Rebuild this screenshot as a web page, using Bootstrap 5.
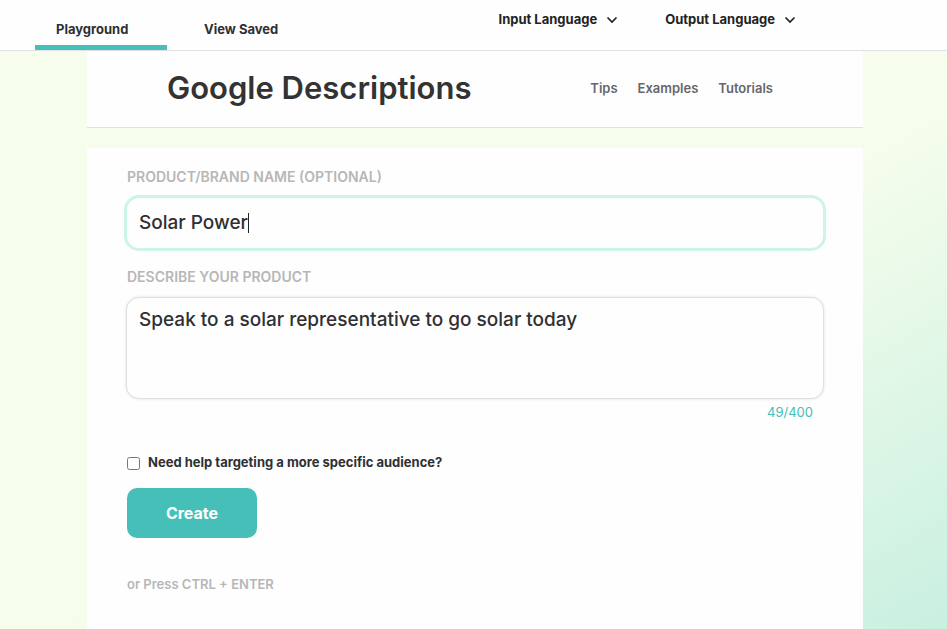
<!DOCTYPE html>
<html lang="en">
<head>
<meta charset="utf-8">
<meta name="viewport" content="width=device-width, initial-scale=1">
<title>Google Descriptions</title>
<link href="https://cdn.jsdelivr.net/npm/bootstrap@5.3.0/dist/css/bootstrap.min.css" rel="stylesheet">
<style>
  body {
    font-family: Inter, "Liberation Sans", sans-serif;
    font-size: 13px;
    line-height: 20px;
    font-weight: 600;
    color: #2f3033;
    background: linear-gradient(150deg, #f6fdec 56%, #c8f0e1 100%) fixed;
  }
  .topbar { background: #fefefe; border-bottom: 1px solid #dfe1e4; padding-left: 35px; font-weight: 700; }
  .tab-link { color: #2f3033; text-decoration: none; width: 132px; height: 50px; padding: 19px 21px 6px; border-bottom: 5px solid transparent; white-space: nowrap; }
  .tab-link.active { border-bottom-color: #46bfb8; }
  .tabs { gap: 16px; }
  .languages { gap: 46px; padding-top: 9px; margin-right: 150px; }
  .lang-btn { font-size: 13px; line-height: 20px; font-weight: 700; color: #222; gap: 8px; }
  .page { padding: 0 84px 0 87px; }
  .panel { background: #fefefe; }
  .title-panel { border-bottom: 1px solid #dfe1e4; padding: 17px 90px 19px 80px; margin-bottom: 20px; }
  .title-panel h1 { font-size: 31px; line-height: 40px; font-weight: 600; color: #333; }
  .title-panel nav { gap: 20px; }
  .title-panel nav a { color: #66676b; text-decoration: none; }
  .form-panel { padding: 19px 37px 35px; }
  .field-label { font-size: 14px; line-height: 20px; color: #b7b7b7; margin: 0 3px 8px; }
  .field-box { font-size: 19px; line-height: 26px; font-weight: 500; color: #2f3033; background: #fefefe; }
  .field-box:focus { color: #2f3033; background: #fefefe; }
  .name-box { height: 56px; border: 3px solid #cdf4e7; border-radius: 15px; padding: 10px 12px 12px; }
  .caret { width: 1px; height: 20px; background: #222; left: 124px; top: 18px; }
  .describe { margin: 0 2px; padding-top: 2px; }
  .text-area { height: 102px; border: 1px solid #dedfe0; border-radius: 13px; padding: 9px 12px; resize: none; box-shadow: 0 0 3px rgba(0, 0, 0, .12); }
  .counter { font-weight: 400; color: #46bfb8; padding-right: 11px; margin: 3px 0 30px; }
  .audience { gap: 8px; padding-left: 3px; font-weight: 700; }
  .audience input { width: 13px; height: 13px; margin: 2px 0 0; }
  .create-btn, .create-btn:hover { width: 130px; height: 50px; margin: 16px 0 0 3px; border-radius: 10px; background: #46bfb8; color: #fff; font-size: 16px; font-weight: 700; }
  .hint { color: #b7b7b7; margin: 36px 3px 0; }
</style>
<script src="https://cdn.jsdelivr.net/npm/bootstrap@5.3.0/dist/js/bootstrap.bundle.min.js"></script>
</head>
<body class="d-flex flex-column min-vh-100">
<header class="topbar d-flex justify-content-between">
  <nav class="tabs d-flex" aria-label="Views">
    <a class="tab-link active" href="#" aria-current="page">Playground</a>
    <a class="tab-link" href="#">View Saved</a>
  </nav>
  <div class="languages d-flex align-items-start">
    <button type="button" class="lang-btn btn p-0 border-0 d-flex align-items-center">Input Language
      <svg width="14" height="14" viewBox="0 0 14 14" fill="none" stroke="#222" stroke-width="1.7" aria-hidden="true"><path d="M2.500 5.500 7 10l4.500-4.500"/></svg>
    </button>
    <button type="button" class="lang-btn btn p-0 border-0 d-flex align-items-center">Output Language
      <svg width="14" height="14" viewBox="0 0 14 14" fill="none" stroke="#222" stroke-width="1.7" aria-hidden="true"><path d="M2.500 5.500 7 10l4.500-4.500"/></svg>
    </button>
  </div>
</header>
<main class="page d-flex flex-column flex-grow-1">
  <section class="panel title-panel d-flex align-items-center justify-content-between">
    <h1 class="m-0">Google Descriptions</h1>
    <nav class="d-flex" aria-label="Help">
      <a href="#">Tips</a>
      <a href="#">Examples</a>
      <a href="#">Tutorials</a>
    </nav>
  </section>
  <form class="panel form-panel flex-grow-1">
    <label class="field-label d-block" for="product">PRODUCT/BRAND NAME (OPTIONAL)</label>
    <div class="position-relative mb-3">
      <input class="form-control field-box name-box" id="product" type="text" value="Solar Power">
      <span class="caret position-absolute" aria-hidden="true"></span>
    </div>
    <label class="field-label d-block" for="describe">DESCRIBE YOUR PRODUCT</label>
    <div class="describe">
      <textarea class="form-control field-box text-area" id="describe">Speak to a solar representative to go solar today</textarea>
      <div class="counter text-end">49/400</div>
    </div>
    <div class="audience d-flex align-items-center">
      <input type="checkbox" id="audience">
      <label for="audience">Need help targeting a more specific audience?</label>
    </div>
    <button type="button" class="btn border-0 create-btn">Create</button>
    <p class="hint">or Press CTRL + ENTER</p>
  </form>
</main>
</body>
</html>
